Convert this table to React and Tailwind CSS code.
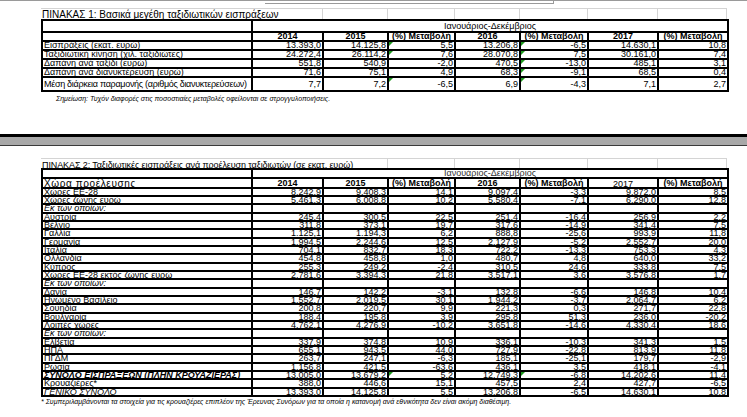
import React from 'react';

const COLS = 'grid grid-cols-[208px_69px_63px_65px_63px_66px_68px_68px] gap-x-[2px] gap-y-[2px] p-[2px] bg-black w-[688px]';

const YEARS = ['2014', '2015', '(%) Μεταβολή', '2016', '(%) Μεταβολή', '2017', '(%) Μεταβολή'];

const T1 = [
    ['Εισπράξεις (εκατ. ευρώ)', ['13.393,0', '14.125,8', '5,5', '13.206,8', '-6,5', '14.630,1', '10,8'], [2, 4]],
    ['Ταξιδιωτική κίνηση (χιλ. ταξιδιώτες)', ['24.272,4', '26.114,2', '7,6', '28.070,8', '7,5', '30.161,0', '7,4'], [2, 4]],
    ['Δαπάνη ανά ταξίδι (ευρώ)', ['551,8', '540,9', '-2,0', '470,5', '-13,0', '485,1', '3,1'], [4]],
    ['Δαπάνη ανά διανυκτέρευση (ευρώ)', ['71,6', '75,1', '4,9', '68,3', '-9,1', '68,5', '0,4'], [4]],
];

const T2 = [
    ['Χώρες ΕΕ-28', ['8.242,9', '9.408,3', '14,1', '9.097,4', '-3,3', '9.872,0', '8,5']],
    ['Χώρες ζώνης ευρώ', ['5.461,3', '6.008,8', '10,2', '5.580,4', '-7,1', '6.290,0', '12,8']],
    ['Εκ των οποίων:', null, 'italic'],
    ['Αυστρία', ['245,4', '300,5', '22,5', '251,4', '-16,4', '256,9', '2,2']],
    ['Βέλγιο', ['311,8', '373,1', '19,7', '317,6', '-14,9', '341,4', '7,5']],
    ['Γαλλία', ['1.125,1', '1.194,3', '6,2', '888,8', '-25,6', '993,9', '11,8']],
    ['Γερμανία', ['1.994,5', '2.244,6', '12,5', '2.127,9', '-5,2', '2.552,7', '20,0']],
    ['Ιταλία', ['704,1', '832,7', '18,3', '722,2', '-13,3', '753,3', '4,3']],
    ['Ολλανδία', ['454,8', '458,8', '1,0', '480,7', '4,8', '640,0', '33,2']],
    ['Κύπρος', ['255,3', '249,2', '-2,4', '310,5', '24,6', '333,8', '7,5']],
    ['Χώρες ΕΕ-28 εκτός ζώνης ευρώ', ['2.781,6', '3.394,3', '21,8', '3.517,1', '3,6', '3.576,8', '1,7']],
    ['Εκ των οποίων:', null, 'italic'],
    ['Δανία', ['146,7', '142,2', '-3,1', '132,8', '-6,6', '146,8', '10,4']],
    ['Ηνωμένο Βασίλειο', ['1.552,7', '2.019,5', '30,1', '1.944,2', '-3,7', '2.064,7', '6,2']],
    ['Σουηδία', ['200,8', '220,7', '9,9', '221,3', '0,3', '271,7', '22,8']],
    ['Βουλγαρία', ['188,4', '195,8', '3,9', '295,8', '51,3', '236,0', '-20,2']],
    ['Λοιπές χώρες', ['4.762,1', '4.276,9', '-10,2', '3.651,8', '-14,6', '4.330,4', '18,6']],
    ['Εκ των οποίων:', null, 'italic'],
    ['Ελβετία', ['337,9', '374,8', '10,9', '336,1', '-10,3', '341,3', '1,5']],
    ['ΗΠΑ', ['655,1', '943,5', '44,0', '727,9', '-22,8', '813,9', '11,8']],
    ['ΠΓΔΜ', ['263,7', '247,1', '-6,3', '185,1', '-25,1', '179,7', '-2,9']],
    ['Ρωσία', ['1.156,8', '421,5', '-63,6', '436,1', '3,5', '418,1', '-4,1']],
    ['ΣΥΝΟΛΟ ΕΙΣΠΡΑΞΕΩΝ (ΠΛΗΝ ΚΡΟΥΑΖΙΕΡΑΣ)', ['13.005,0', '13.679,2', '5,2', '12.749,3', '-6,8', '14.202,6', '11,4'], 'italic font-bold', [2, 4]],
    ['Κρουαζιέρες*', ['388,0', '446,6', '15,1', '457,5', '2,4', '427,7', '-6,5']],
    ['ΓΕΝΙΚΟ ΣΥΝΟΛΟ', ['13.393,0', '14.125,8', '5,5', '13.206,8', '-6,5', '14.630,1', '10,8'], 'italic'],
];

function Flag() {
    return <div className="absolute left-0 top-0 w-0 h-0 border-t-[4px] border-r-[4px] border-t-[#1f9a1f] border-r-transparent" />;
}

function TitleRow({ text, first, h, textCls }) {
    const rest = first === 281 ? [65, 67, 65, 68, 70, 70] : [67, 65, 68, 70, 70];
    return (
        <div className={`flex ml-[41px] ${h}`}>
            <div className={`${first === 281 ? 'w-[281px]' : 'w-[346px]'} border-t border-[#d4d4d4] whitespace-nowrap pl-[1px] ${textCls}`}>{text}</div>
            {rest.map((w, i) => (
                <div key={i} style={{ width: w }} className={`border-t border-l border-[#d4d4d4] bg-white ${i === rest.length - 1 ? 'border-r' : ''}`} />
            ))}
        </div>
    );
}

function Cells({ label, vals, cell, labelCls = '', flags = [] }) {
    return (
        <>
            <div className={`bg-white overflow-hidden whitespace-nowrap pl-[1px] ${cell} ${labelCls}`}>{label}</div>
            {(vals || ['', '', '', '', '', '', '']).map((v, i) => (
                <div key={i} className={`relative bg-white overflow-hidden whitespace-nowrap text-right pr-[1px] ${cell}`}>
                    {flags.includes(i) && <Flag />}
                    {v}
                </div>
            ))}
        </>
    );
}

export default function App() {
    return (
        <div className="w-[747px] h-[417px] overflow-hidden bg-white text-black font-['Liberation_Sans',Arial,sans-serif]">
            <div className="h-[8px]">
                <div className="h-px bg-[#9a9a9a]" />
                <div className="ml-[265px] w-[289px] h-[3px] border-b border-r border-[#9a9a9a]" />
            </div>

            <TitleRow text="ΠΙΝΑΚΑΣ 1: Βασικά μεγέθη ταξιδιωτικών εισπράξεων" first={281} h="h-[11px]" textCls="text-[10px] leading-[11px]" />

            <div className={`${COLS} ml-[41px] text-[9px]`}>
                <div className="bg-white h-[10px]" />
                <div className="col-span-7 bg-white h-[10px] text-center leading-[11px] overflow-hidden">Ιανουάριος-Δεκέμβριος</div>
                <div className="bg-white h-[7px]" />
                {YEARS.map((y) => (
                    <div key={y} className="bg-white h-[7px] leading-[7px] overflow-hidden text-center font-bold whitespace-nowrap">{y}</div>
                ))}
                {T1.map(([l, v, f]) => (
                    <Cells key={l} label={l} vals={v} flags={f} cell="h-[7px] leading-[7px]" />
                ))}
                <Cells
                    label="Μέση διάρκεια παραμονής (αριθμός διανυκτερεύσεων)"
                    vals={['7,7', '7,2', '-6,5', '6,9', '-4,3', '7,1', '2,7']}
                    flags={[2, 4]}
                    cell="h-[12px] leading-[12px]"
                    labelCls="tracking-[-0.3px]"
                />
            </div>
            <div className="mt-[3px] ml-[56px] h-[8px] text-[7px] leading-[8px] italic whitespace-nowrap">
                Σημείωση: Τυχόν διαφορές στις ποσοστιαίες μεταβολές οφείλονται σε στρογγυλοποιήσεις.
            </div>

            <div className="mt-[31px]">
                <div className="h-[3px] bg-black" />
                <div className="h-[8px] bg-[#a8a8a8]" />
                <div className="h-px bg-[#3a3a3a]" />
            </div>

            <div className="h-[12px]" />
            <TitleRow
                text="ΠΙΝΑΚΑΣ 2: Ταξιδιωτικές εισπράξεις ανά προέλευση ταξιδιωτών (σε εκατ. ευρώ)"
                first={346}
                h="h-[10px]"
                textCls="text-[9px] leading-[13px] h-[10px] overflow-hidden tracking-[-0.1px]"
            />

            <div className={`${COLS} ml-[41px] text-[9px]`}>
                <div className="bg-white h-[7px]" />
                <div className="col-span-7 bg-white h-[7px] text-center leading-[7px] overflow-hidden text-[#333]">Ιανουάριος-Δεκέμβριος</div>
                <div className="bg-white h-[8px] leading-[9px] overflow-hidden pl-[1px] text-[10px] tracking-[0.6px] whitespace-nowrap">Χώρα προέλευσης</div>
                {YEARS.map((y, i) => (
                    <div
                        key={i}
                        className={`bg-white h-[8px] overflow-hidden text-center whitespace-nowrap ${i === 5 ? 'leading-[11px]' : 'leading-[8px] font-bold'}`}
                    >
                        {y}
                    </div>
                ))}
                {T2.map(([l, v, c, f], i) => (
                    <Cells
                        key={i}
                        label={l}
                        vals={v}
                        labelCls={c}
                        flags={f}
                        cell={i % 3 === 2 ? 'h-[7px] leading-[6px]' : 'h-[6px] leading-[6px]'}
                    />
                ))}
            </div>
            <div className="ml-[41px] mt-px h-[7px] text-[7px] leading-[7px] italic whitespace-nowrap">
                * Συμπεριλαμβάνονται τα στοιχεία για τις κρουαζιέρες επιπλέον της Έρευνας Συνόρων για τα οποία η κατανομή ανά εθνικότητα δεν είναι ακόμη διαθέσιμη.
            </div>
        </div>
    );
}
